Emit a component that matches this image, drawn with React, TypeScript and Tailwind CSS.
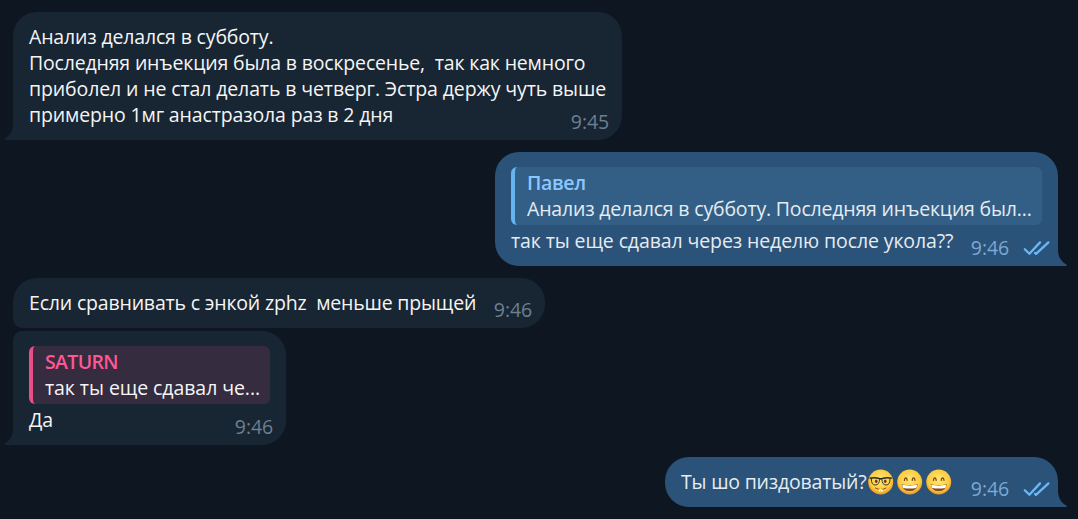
import type { JSX, ReactNode } from 'react';
import clsx from 'clsx';

interface BubbleProps {
  out?: boolean;
  tail?: boolean;
  time: string;
  className: string;
  children: ReactNode;
}

interface ReplyProps {
  out?: boolean;
  name: string;
  text: string;
}

function Checks(): JSX.Element {
  return (
    <svg className="ml-[14px] mb-[5px] h-[16px] w-[28px]" viewBox="0 0 28 16" fill="none" aria-hidden="true">
      <path
        d="M1.8 9.2L6.4 13.8L17 2.4M12 12.9L13 13.8L25.4 2.4"
        stroke="#6ab8f7"
        strokeWidth="2.3"
        strokeLinecap="round"
        strokeLinejoin="round"
      />
    </svg>
  );
}

function Tail({ out }: { out?: boolean }): JSX.Element {
  return (
    <svg
      className={clsx(
        'absolute bottom-0 h-[20px] w-[10px]',
        out ? 'left-full -ml-px -scale-x-100 text-[#2b5278]' : 'right-full -mr-px text-[#182533]',
      )}
      viewBox="0 0 10 20"
      aria-hidden="true"
    >
      <path d="M10 0H9V4C9 11 5.5 16 0.6 18.6C-0.1 19.1 0.2 20 1 20H10Z" fill="currentColor" />
    </svg>
  );
}

function Reply({ out, name, text }: ReplyProps): JSX.Element {
  return (
    <div
      className={clsx(
        'mb-[3px] h-[58px] overflow-hidden rounded-[6px] border-l-4 pl-3 pt-[3px]',
        out ? 'border-[#64b5ef] bg-[#335f87]' : 'border-[#e84f88] bg-[#352c3f]',
      )}
    >
      <div
        className={clsx(
          'font-semibold leading-[26px]',
          out ? 'tracking-[-0.35px] text-[#8bc7ff]' : 'tracking-[-0.65px] text-[#ff5694]',
        )}
      >
        {name}
      </div>
      <div className={clsx('whitespace-nowrap leading-[26px]', out ? 'tracking-[-0.18px]' : 'tracking-[-0.07px]')}>
        {text}
      </div>
    </div>
  );
}

function Bubble({ out, tail, time, className, children }: BubbleProps): JSX.Element {
  return (
    <article
      className={clsx(
        'relative px-4',
        out ? 'self-end bg-[#2b5278] text-[#e4ecf2]' : 'self-start bg-[#182533] text-[#f5f5f5]',
        className,
      )}
    >
      {children}
      <div
        className={clsx(
          'absolute bottom-[5px] flex items-end leading-[26px]',
          out ? 'right-[7px] text-[#7da8d3]' : 'right-[13px] text-[#6d7f8f]',
        )}
      >
        <time className="tracking-[-0.1px]">{time}</time>
        {out && <Checks />}
      </div>
      {tail && <Tail out={out} />}
    </article>
  );
}

function EmojiBase({ id, children }: { id: string; children: ReactNode }): JSX.Element {
  return (
    <svg className="h-[26px] w-[26px] shrink-0" viewBox="0 0 26 26" aria-hidden="true">
      <defs>
        <radialGradient id={id} cx="0.5" cy="0.42" r="0.6">
          <stop offset="0" stopColor="#ffe878" />
          <stop offset="0.7" stopColor="#fdcb40" />
          <stop offset="1" stopColor="#ea8f1f" />
        </radialGradient>
      </defs>
      <circle cx="12.7" cy="13" r="12.5" fill={`url(#${id})`} />
      {children}
    </svg>
  );
}

function NerdEmoji(): JSX.Element {
  return (
    <EmojiBase id="nerd">
      <ellipse cx="8.2" cy="12.2" rx="1.3" ry="1.8" fill="#6b3a12" />
      <ellipse cx="17.2" cy="12.2" rx="1.3" ry="1.8" fill="#6b3a12" />
      <path
        d="M1.6 9.3Q7 8.2 11 9.6Q12.7 10.2 14.4 9.6Q18.4 8.2 23.8 9.3"
        fill="none"
        stroke="#2c2a22"
        strokeWidth="1.6"
      />
      <path
        d="M3.4 9.8Q3.2 16 7.4 16Q11.2 16 11.6 10.2M22 9.8Q22.2 16 18 16Q14.2 16 13.8 10.2"
        fill="none"
        stroke="#3b3420"
        strokeWidth="1"
      />
      <path d="M7.4 19Q12.7 22.2 18 19" fill="none" stroke="#8a4b12" strokeWidth="1" strokeLinecap="round" />
      <path d="M10.8 20.2H14.6V22.4H13V21H12.4V22.4H10.8Z" fill="#fff" />
    </EmojiBase>
  );
}

function GrinEmoji({ id }: { id: string }): JSX.Element {
  return (
    <EmojiBase id={id}>
      <path
        d="M7.4 11.4Q7.7 8.8 8.8 8.8Q9.9 8.8 10.2 11.4M15.2 11.4Q15.5 8.8 16.6 8.8Q17.7 8.8 18 11.4"
        fill="none"
        stroke="#7a4312"
        strokeWidth="1.2"
        strokeLinecap="round"
      />
      <path d="M4.6 15.2Q12.7 17 20.8 15.2Q20 22 12.7 22Q5.4 22 4.6 15.2Z" fill="#854718" />
      <path d="M5.2 15.8Q12.7 17.4 20.2 15.8Q19.9 18 19.2 18.9Q12.7 20 6.2 18.9Q5.5 18 5.2 15.8Z" fill="#fff" />
    </EmojiBase>
  );
}

export default function App(): JSX.Element {
  return (
    <main className="flex h-[519px] w-[1078px] flex-col overflow-hidden bg-[#0e1621] pl-[13px] pr-5 pt-3 font-['Open_Sans','Noto_Sans',sans-serif] text-[19.5px]">
      <Bubble tail time="9:45" className="h-[128px] w-[609px] rounded-[24px] rounded-bl-none pt-3">
        <div className="whitespace-pre leading-[26px]">
          <p className="tracking-[-0.16px]">Анализ делался в субботу.</p>
          <p className="tracking-[-0.17px]">{'Последняя инъекция была в воскресенье,  так как немного'}</p>
          <p className="tracking-[-0.12px]">приболел и не стал делать в четверг. Эстра держу чуть выше</p>
          <p className="tracking-[-0.14px]">примерно 1мг анастразола раз в 2 дня</p>
        </div>
      </Bubble>

      <Bubble out tail time="9:46" className="mt-3 h-[114px] w-[563px] rounded-[24px] rounded-br-none pt-[15px]">
        <Reply out name="Павел" text="Анализ делался в субботу. Последняя инъекция был..." />
        <p className="leading-[26px] tracking-[-0.11px]">так ты еще сдавал через неделю после укола??</p>
      </Bubble>

      <Bubble time="9:46" className="mt-3 h-[50px] w-[532px] rounded-[24px] rounded-bl-[9px] pt-3">
        <p className="whitespace-pre leading-[26px] tracking-[-0.18px]">{'Если сравнивать с энкой zphz  меньше прыщей'}</p>
      </Bubble>

      <Bubble tail time="9:46" className="mt-[3px] h-[114px] w-[273px] rounded-[24px] rounded-tl-[9px] rounded-bl-none pt-[15px]">
        <Reply name="SATURN" text="так ты еще сдавал че..." />
        <p className="leading-[26px]">Да</p>
      </Bubble>

      <Bubble out tail time="9:46" className="mt-3 h-[50px] w-[393px] rounded-[24px] rounded-br-none pt-3">
        <div className="flex items-center gap-[3px] leading-[26px]">
          <p className="w-[184px] whitespace-nowrap tracking-[-0.2px]">Ты шо пиздоватый?</p>
          <NerdEmoji />
          <GrinEmoji id="grin-a" />
          <GrinEmoji id="grin-b" />
        </div>
      </Bubble>
    </main>
  );
}
